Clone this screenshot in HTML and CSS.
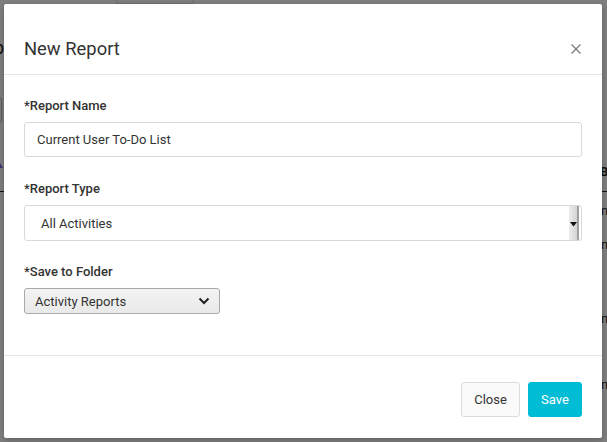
FILE: index.html
```html
<!DOCTYPE html>
<html>
<head>
<meta charset="utf-8">
<link rel="stylesheet" href="styles.css">
</head>
<body>
<div class="page">
  <div class="bg-search">Search</div>
  <div class="bg-p">p</div>
  <div class="bg-box"></div>
  <div class="bg-mark"></div>
  <div class="bg-line-left"></div>
  <div class="bg-line-right"></div>
  <div class="bg-b">B</div>
  <div class="bg-n n1">n</div>
  <div class="bg-n n2">n</div>
  <div class="bg-n n3">n</div>
  <div class="bg-n n4">n</div>
</div>
<div class="overlay">
  <div class="modal">
    <div class="modal-header">
      <h2 class="modal-title">New Report</h2>
      <svg class="close-x" width="10" height="10" viewBox="0 0 10 10"><path d="M0.5 0.5 L9.5 9.5 M9.5 0.5 L0.5 9.5" stroke="#777" stroke-width="1.2" fill="none"/></svg>
    </div>
    <div class="modal-body">
      <label class="field-label">*Report Name</label>
      <div class="text-input">Current User To-Do List</div>
      <label class="field-label gap">*Report Type</label>
      <div class="list-select">
        <span class="list-value">All Activities</span>
        <span class="spinner"><svg width="7" height="5" viewBox="0 0 7 5"><path d="M0 0 H7 L3.5 4.5 Z" fill="#111"/></svg></span>
      </div>
      <label class="field-label gap2">*Save to Folder</label>
      <div class="folder-select">
        <span>Activity Reports</span>
        <svg class="chev" width="12" height="8" viewBox="0 0 12 8"><path d="M1.5 1.5 L6 6 L10.5 1.5" stroke="#222" stroke-width="2" fill="none"/></svg>
      </div>
    </div>
    <div class="modal-footer">
      <button class="btn btn-default">Close</button>
      <button class="btn btn-primary">Save</button>
    </div>
  </div>
</div>
</body>
</html>
```
FILE: styles.css
```css
* { box-sizing: border-box; }
html, body { margin: 0; padding: 0; }
body {
  width: 607px;
  height: 442px;
  overflow: hidden;
  background: #7f7f7f;
  font-family: Roboto, "Liberation Sans", sans-serif;
  position: relative;
}
.page { position: absolute; inset: 0; color: #1a1a1a; }
.bg-search {
  position: absolute; left: 116px; top: -8px; width: 78px; height: 12px;
  border: 1px solid #6e6e6e; border-top: none;
  font-size: 13px; line-height: 0; color: #3a3a3a; text-align: center;
}
.bg-p { position: absolute; left: -6px; top: 37px; font-size: 18px; color: #111; }
.bg-box { position: absolute; left: -4px; top: 97px; width: 6px; height: 26px; border: 1px solid #5a5a5a; border-radius: 3px; }
.bg-mark { position: absolute; left: 0; top: 163px; width: 0; height: 0; border-left: 3px solid #3b3a7a; border-top: 5px solid transparent; }
.bg-line-left { position: absolute; left: 0; top: 191px; width: 4px; height: 1px; background: #111; }
.bg-line-right { position: absolute; left: 602px; top: 191px; width: 5px; height: 1px; background: #111; }
.bg-b { position: absolute; left: 600px; top: 164px; font-size: 13px; font-weight: 700; color: #111; }
.bg-n { position: absolute; left: 601px; font-size: 13px; color: #111; }
.n1 { top: 203px; } .n2 { top: 237px; } .n3 { top: 311px; } .n4 { top: 377px; }

.overlay {
  position: absolute; inset: 0;
  padding: 4px 5px 4px 4px;
}
.modal {
  width: 598px;
  height: 434px;
  background: #fff;
  border-radius: 2px;
  box-shadow: 0 2px 6px rgba(0,0,0,0.25);
  display: flex;
  flex-direction: column;
}
.modal-header {
  height: 71px;
  padding: 19px 21px 0 20px;
  border-bottom: 1px solid #e5e5e5;
  display: flex;
  align-items: center;
  justify-content: space-between;
}
.modal-title {
  margin: 0;
  font-size: 18.4px;
  font-weight: 400;
  color: #333;
  line-height: 20px;
}
.close-x { display: block; margin-top: 0; }
.modal-body {
  padding: 23px 20px 41px 20px;
  display: flex;
  flex-direction: column;
  align-items: flex-start;
  border-bottom: 1px solid #e5e5e5;
}
.field-label {
  font-size: 13px;
  font-weight: 500;
  color: #333;
  line-height: 16px;
  margin-bottom: 8px;
}
.field-label.gap { margin-top: 24px; }
.field-label.gap2 { margin-top: 23px; }
.text-input {
  width: 558px;
  height: 35px;
  border: 1px solid #d9d9d9;
  border-radius: 3px;
  padding: 0 12px;
  font-size: 13px;
  color: #333;
  display: flex;
  align-items: center;
}
.list-select {
  width: 558px;
  height: 36px;
  border: 1px solid #d9d9d9;
  border-radius: 3px;
  padding: 0 1px 0 16px;
  font-size: 13px;
  color: #333;
  display: flex;
  align-items: center;
  justify-content: space-between;
}
.spinner {
  width: 10px;
  height: 34px;
  background: linear-gradient(to right, #ececec, #d4d4d4);
  border-right: 2px solid #a0a0a0;
  display: flex;
  align-items: center;
  justify-content: center;
  margin-right: 1px;
}
.spinner svg { display: block; margin-top: 2px; }
.folder-select {
  width: 196px;
  height: 26px;
  border: 1px solid #a9a9a9;
  border-radius: 3px;
  background: linear-gradient(#f3f3f3, #e9e9e9);
  padding: 0 9px 0 10px;
  font-size: 13px;
  color: #333;
  display: flex;
  align-items: center;
  justify-content: space-between;
}
.chev { display: block; }
.modal-footer {
  flex: 1;
  display: flex;
  justify-content: flex-end;
  align-items: flex-start;
  gap: 8px;
  padding: 26px 20px 0 0;
}
.btn {
  height: 35px;
  border-radius: 3px;
  font-family: Roboto, "Liberation Sans", sans-serif;
  font-size: 13px;
  padding: 0;
  cursor: pointer;
}
.btn-default {
  width: 59px;
  background: #fafafa;
  border: 1px solid #dcdcdc;
  color: #333;
}
.btn-primary {
  width: 54px;
  background: #00bcd4;
  border: 1px solid #00bcd4;
  color: #fff;
}
```
